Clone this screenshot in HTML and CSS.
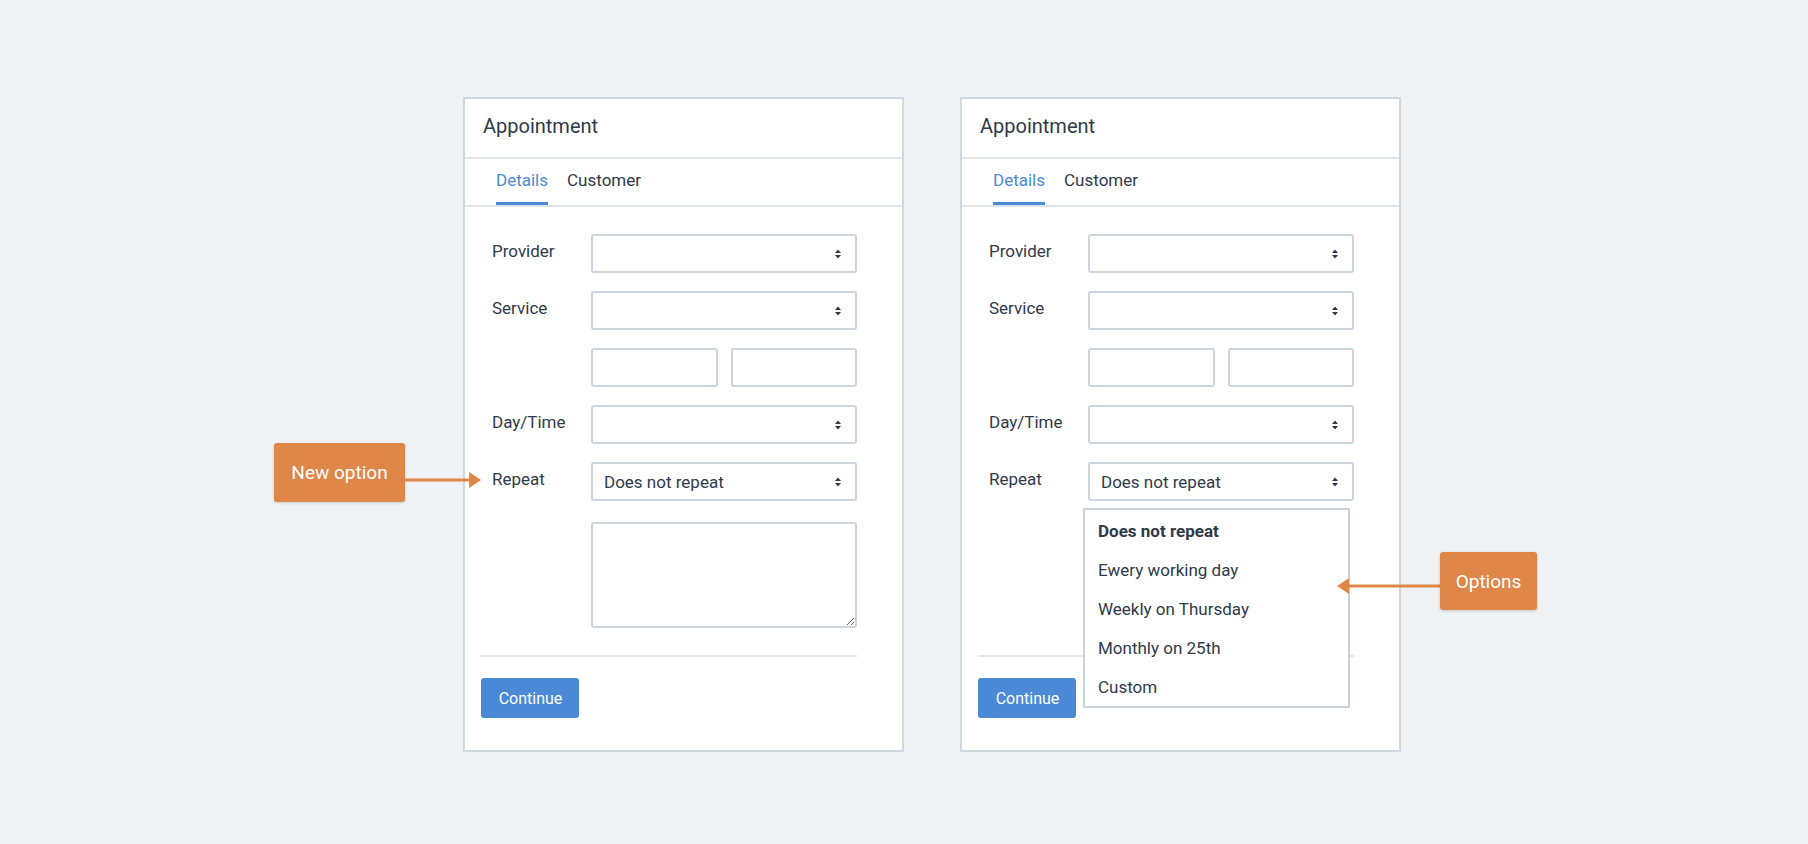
FILE: index.html
```html
<!DOCTYPE html>
<html lang="en">
<head>
<meta charset="utf-8">
<title>Appointment</title>
<link rel="stylesheet" href="styles.css">
</head>
<body>
<main class="stage">
  <section class="card">
    <header class="card-header">Appointment</header>
    <nav class="tabs"><span class="tab active">Details</span><span class="tab">Customer</span></nav>
    <div class="card-body">
      <div class="form">
        <div class="row"><span class="label">Provider</span><div class="select"><span class="value"></span><svg class="chev" width="6" height="10" viewBox="0 0 6 10"><path d="M0 4 L3 0.5 L6 4 Z M0 6 L3 9.5 L6 6 Z" fill="#2e3a4b"/></svg></div></div>
        <div class="row"><span class="label">Service</span><div class="select"><span class="value"></span><svg class="chev" width="6" height="10" viewBox="0 0 6 10"><path d="M0 4 L3 0.5 L6 4 Z M0 6 L3 9.5 L6 6 Z" fill="#2e3a4b"/></svg></div></div>
        <div class="row"><span class="label"></span><div class="pair"><div class="input"></div><div class="input"></div></div></div>
        <div class="row"><span class="label">Day/Time</span><div class="select"><span class="value"></span><svg class="chev" width="6" height="10" viewBox="0 0 6 10"><path d="M0 4 L3 0.5 L6 4 Z M0 6 L3 9.5 L6 6 Z" fill="#2e3a4b"/></svg></div></div>
        <div class="row repeat-row">
          <div class="callout callout-left">
            <div class="callout-box callout-new">New option</div>
            <svg class="callout-arrow arrow-right" width="76" height="20" viewBox="0 0 76 20"><line x1="0" y1="10" x2="66" y2="10" stroke="#de8748" stroke-width="3"/><path d="M64 2 L76 10 L64 18 Z" fill="#de8748"/></svg>
          </div>
          <span class="label">Repeat</span><div class="select"><span class="value">Does not repeat</span><svg class="chev" width="6" height="10" viewBox="0 0 6 10"><path d="M0 4 L3 0.5 L6 4 Z M0 6 L3 9.5 L6 6 Z" fill="#2e3a4b"/></svg></div>
        </div>
        <div class="row textarea-row"><span class="label"></span><textarea class="textarea"></textarea></div>
      </div>
      <div class="divider"></div>
      <button class="btn" type="button">Continue</button>
    </div>
  </section>

  <section class="card">
    <header class="card-header">Appointment</header>
    <nav class="tabs"><span class="tab active">Details</span><span class="tab">Customer</span></nav>
    <div class="card-body">
      <div class="form">
        <div class="row"><span class="label">Provider</span><div class="select"><span class="value"></span><svg class="chev" width="6" height="10" viewBox="0 0 6 10"><path d="M0 4 L3 0.5 L6 4 Z M0 6 L3 9.5 L6 6 Z" fill="#2e3a4b"/></svg></div></div>
        <div class="row"><span class="label">Service</span><div class="select"><span class="value"></span><svg class="chev" width="6" height="10" viewBox="0 0 6 10"><path d="M0 4 L3 0.5 L6 4 Z M0 6 L3 9.5 L6 6 Z" fill="#2e3a4b"/></svg></div></div>
        <div class="row"><span class="label"></span><div class="pair"><div class="input"></div><div class="input"></div></div></div>
        <div class="row"><span class="label">Day/Time</span><div class="select"><span class="value"></span><svg class="chev" width="6" height="10" viewBox="0 0 6 10"><path d="M0 4 L3 0.5 L6 4 Z M0 6 L3 9.5 L6 6 Z" fill="#2e3a4b"/></svg></div></div>
        <div class="row repeat-row">
          <span class="label">Repeat</span>
          <div class="select open"><span class="value">Does not repeat</span><svg class="chev" width="6" height="10" viewBox="0 0 6 10"><path d="M0 4 L3 0.5 L6 4 Z M0 6 L3 9.5 L6 6 Z" fill="#2e3a4b"/></svg>
            <ul class="dropdown">
              <li class="option selected">Does not repeat</li>
              <li class="option">Ewery working day</li>
              <li class="option">Weekly on Thursday</li>
              <li class="option">Monthly on 25th</li>
              <li class="option">Custom</li>
              <li class="callout callout-right">
                <svg class="callout-arrow arrow-left" width="103" height="20" viewBox="0 0 103 20"><line x1="10" y1="10" x2="103" y2="10" stroke="#de8748" stroke-width="3"/><path d="M12 2 L0 10 L12 18 Z" fill="#de8748"/></svg>
                <div class="callout-box callout-options">Options</div>
              </li>
            </ul>
          </div>
        </div>
        <div class="row textarea-row hidden-row"><span class="label"></span><textarea class="textarea"></textarea></div>
      </div>
      <div class="divider"></div>
      <button class="btn" type="button">Continue</button>
    </div>
  </section>
</main>
</body>
</html>
```

FILE: styles.css
```css
* { box-sizing: border-box; }

html, body {
  margin: 0;
  padding: 0;
  background: #eff3f6;
  font-family: Roboto, "Noto Sans", "Liberation Sans", sans-serif;
  color: #2e3a4b;
}

.stage {
  display: flex;
  gap: 56px;
  padding: 97px 0 0 463px;
  min-height: 844px;
}

.card {
  width: 441px;
  height: 655px;
  background: #ffffff;
  border: 2px solid #cfd8e1;
  display: flex;
  flex-direction: column;
}

.card-header {
  height: 60px;
  border-bottom: 2px solid #dde4ea;
  padding: 0 0 4px 18px;
  font-size: 20px;
  line-height: 54px;
  color: #2e3a4b;
}

.tabs {
  display: flex;
  gap: 19px;
  padding-left: 31px;
  border-bottom: 2px solid #dde4ea;
  height: 48px;
}

.tab {
  font-size: 17px;
  line-height: 20px;
  padding-top: 11px;
  height: 46px;
  border-bottom: 3px solid transparent;
  color: #2e3a4b;
}

.tab.active {
  color: #4a89d6;
  border-bottom-color: #4a89d6;
}

.card-body {
  padding: 27px 45px 32px 16px;
  display: flex;
  flex-direction: column;
  align-items: flex-start;
}

.form {
  width: 376px;
  display: flex;
  flex-direction: column;
  gap: 18px;
}

.row {
  display: flex;
  align-items: flex-start;
  height: 39px;
  position: relative;
}

.label {
  width: 110px;
  padding-left: 11px;
  font-size: 17px;
  line-height: 35px;
  color: #2e3a4b;
  flex: none;
}

.select {
  position: relative;
  width: 266px;
  height: 39px;
  border: 2px solid #ccd5de;
  border-radius: 3px;
  background: #fff;
  display: flex;
  align-items: center;
  justify-content: space-between;
  padding: 0 14px 0 11px;
}

.select .value {
  font-size: 17px;
  color: #2e3a4b;
  padding-top: 1px;
}

.chev { flex: none; }

.pair {
  width: 266px;
  display: flex;
  gap: 13px;
}

.input {
  flex: 1;
  height: 39px;
  border: 2px solid #ccd5de;
  border-radius: 3px;
  background: #fff;
}

.textarea-row {
  height: 106px;
  margin-top: 3px;
  align-items: stretch;
}

.textarea {
  width: 266px;
  height: 106px;
  border: 2px solid #ccd5de;
  border-radius: 3px;
  background: #fff;
  margin: 0;
  padding: 6px 10px;
  font-family: inherit;
  font-size: 17px;
  resize: both;
  outline: none;
}

.hidden-row .textarea { visibility: hidden; }

.divider {
  width: 376px;
  height: 2px;
  background: #e2e8ee;
  margin-top: 27px;
}

.btn {
  margin-top: 21px;
  width: 98px;
  height: 40px;
  border: 0;
  border-radius: 3px;
  background: #4a89d6;
  color: #ffffff;
  font-family: inherit;
  font-size: 16px;
  padding: 0 0 0 1px;
  cursor: pointer;
}

/* Dropdown */
.dropdown {
  position: absolute;
  left: -7px;
  top: 44px;
  width: 267px;
  height: 200px;
  margin: 0;
  padding: 2px 0 0;
  list-style: none;
  background: #fff;
  border: 2px solid #c9d3dc;
  z-index: 5;
}

.option {
  height: 39px;
  line-height: 39px;
  padding-left: 13px;
  font-size: 17px;
  color: #2e3a4b;
  white-space: nowrap;
}

.option.selected { font-weight: 700; }

/* Callouts */
.callout {
  position: absolute;
  z-index: 6;
}

.callout-box {
  background: #de8748;
  color: #ffffff;
  border-radius: 3px;
  box-shadow: 0 1px 3px rgba(0, 0, 0, 0.18);
  font-size: 19px;
  display: flex;
  align-items: center;
  justify-content: center;
}

.callout-arrow {
  position: absolute;
  display: block;
}

.callout-left {
  right: 100%;
  top: -19px;
  width: 207px;
  height: 59px;
}

.callout-new {
  width: 131px;
  height: 59px;
}

.arrow-right {
  left: 131px;
  top: 27px;
}

.callout-right {
  left: 252px;
  top: 42px;
  width: 200px;
  height: 58px;
}

.arrow-left {
  left: 0;
  top: 24px;
}

.callout-options {
  position: absolute;
  left: 103px;
  top: 0;
  width: 97px;
  height: 58px;
}
```
